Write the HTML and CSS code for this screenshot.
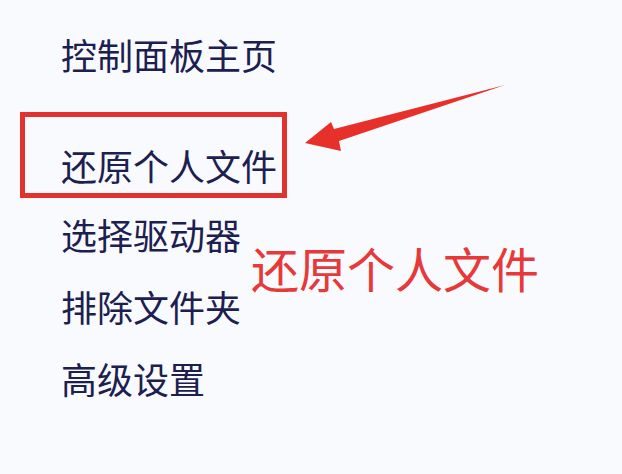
FILE: index.html
```html
<!DOCTYPE html>
<html lang="zh-CN">
<head>
<meta charset="utf-8">
<title>还原个人文件</title>
<link rel="stylesheet" href="styles.css">
</head>
<body>
<div class="page">
  <ul class="menu">
    <li class="item">控制面板主页</li>
    <li class="item item-marked">还原个人文件</li>
    <li class="item">选择驱动器</li>
    <li class="item">排除文件夹</li>
    <li class="item">高级设置</li>
  </ul>
  <svg class="arrow" width="622" height="474" viewBox="0 0 622 474" aria-hidden="true">
    <polygon points="305,143 331,122 334,129 505,85 339,141 341,151" fill="#e8302b"/>
  </svg>
  <div class="callout">还原个人文件</div>
</div>
</body>
</html>
```
FILE: styles.css
```css
html, body {
  margin: 0;
  padding: 0;
  background: #f9fafd;
}
.page {
  position: relative;
  width: 622px;
  height: 474px;
  overflow: hidden;
  font-family: "Noto Sans CJK SC", "Noto Sans", sans-serif;
}
.menu {
  list-style: none;
  margin: 0;
  padding: 18px 0 0 20px;
  display: flex;
  flex-direction: column;
  align-items: flex-start;
}
.item {
  font-size: 36px;
  line-height: 72px;
  color: #1c2050;
  padding-left: 41px;
  white-space: nowrap;
}
.item-marked {
  margin-top: 22px;
  border: 5px solid #e2322e;
  padding: 30px 5px 10px 36px;
  line-height: 36px;
}
.arrow {
  position: absolute;
  left: 0;
  top: 0;
}
.callout {
  position: absolute;
  left: 251px;
  top: 243px;
  font-size: 48px;
  line-height: 48px;
  color: #e5393a;
  white-space: nowrap;
}
```
